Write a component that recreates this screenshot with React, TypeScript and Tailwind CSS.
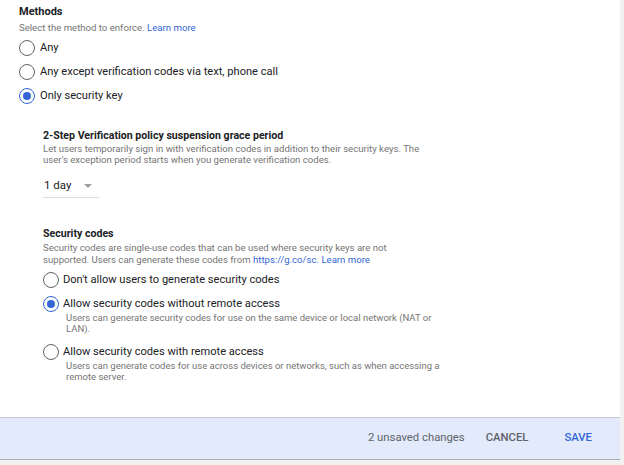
import { useState } from "react";

const methods = [
  "Any",
  "Any except verification codes via text, phone call",
  "Only security key",
];

const codeOptions = [
  { label: "Don't allow users to generate security codes", desc: "" },
  {
    label: "Allow security codes without remote access",
    desc: "Users can generate security codes for use on the same device or local network (NAT or LAN).",
  },
  {
    label: "Allow security codes with remote access",
    desc: "Users can generate codes for use across devices or networks, such as when accessing a remote server.",
  },
];

function Radio({ checked }: { checked: boolean }) {
  return (
    <span
      className={
        "flex h-[16px] w-[16px] shrink-0 items-center justify-center rounded-full border-[1.5px] " +
        (checked ? "border-[#3367d6]" : "border-[#5f6368]")
      }
    >
      {checked && <span className="h-[8px] w-[8px] rounded-full bg-[#3367d6]" />}
    </span>
  );
}

export default function App() {
  const [method, setMethod] = useState(2);
  const [code, setCode] = useState(1);

  return (
    <div
      className="flex h-[465px] w-[624px] flex-col overflow-hidden bg-[#f1f1f1] text-[#202124]"
      style={{ fontFamily: "Roboto, 'Liberation Sans', sans-serif" }}
    >
      <div className="flex h-[417px] w-[620px] flex-col bg-white pl-[19px] pt-[4px]">
        {/* Methods */}
        <h3 className="text-[11px] leading-[16px] font-bold">Methods</h3>
        <p className="mt-[1px] text-[9.6px] leading-[13px] text-[#757575]">
          Select the method to enforce. <span className="text-[#3367d6]">Learn more</span>
        </p>
        <div className="mt-[2px] flex flex-col">
          {methods.map((m, i) => (
            <label
              key={m}
              onClick={() => setMethod(i)}
              className="flex h-[24px] cursor-pointer items-center gap-[5px] text-[11.1px]"
            >
              <Radio checked={method === i} />
              <span>{m}</span>
            </label>
          ))}
        </div>

        {/* Grace period */}
        <div className="ml-[24px] mt-[21px] flex flex-col">
          <h3 className="text-[10.6px] leading-[14px] font-bold">
            2-Step Verification policy suspension grace period
          </h3>
          <p className="w-[390px] text-[9.6px] leading-[11px] text-[#757575]">
            Let users temporarily sign in with verification codes in addition to their security keys. The
            user&apos;s exception period starts when you generate verification codes.
          </p>
          <div className="mt-[10px] flex h-[23px] w-[56px] items-center justify-between border-b border-[#dadce0] pl-[1px] pr-[7px] text-[11.5px]">
            <span>1 day</span>
            <svg width="8" height="4" viewBox="0 0 8 4">
              <path d="M0 0h8L4 4z" fill="#9e9e9e" />
            </svg>
          </div>
        </div>

        {/* Security codes */}
        <div className="ml-[24px] mt-[29px] flex flex-col">
          <h3 className="text-[10.6px] leading-[14px] font-bold">Security codes</h3>
          <p className="mt-[1px] w-[390px] text-[9.6px] leading-[12px] text-[#757575]">
            Security codes are single-use codes that can be used where security keys are not supported.
            Users can generate these codes from <span className="text-[#3367d6]">https://g.co/sc. Learn more</span>
          </p>
          <div className="mt-[2px] flex flex-col">
            {codeOptions.map((o, i) => (
              <div key={o.label} className="flex flex-col">
                <label
                  onClick={() => setCode(i)}
                  className="flex h-[24px] cursor-pointer items-center gap-[4px] text-[11.1px]"
                >
                  <Radio checked={code === i} />
                  <span>{o.label}</span>
                </label>
                {o.desc && (
                  <p className="mb-[6px] ml-[23px] mt-[-3px] w-[380px] text-[9.5px] leading-[10.5px] text-[#757575]">
                    {o.desc}
                  </p>
                )}
              </div>
            ))}
          </div>
        </div>
      </div>

      {/* Footer */}
      <div className="flex h-[43px] w-[620px] items-center justify-end border-y border-t-[#c4c9d2] border-b-[#a9adb3] bg-[#e2eafc] pr-[28px] text-[11.3px]">
        <span className="text-[#5f6368]">2 unsaved changes</span>
        <button className="ml-[21px] font-medium text-[#5f6368]">CANCEL</button>
        <button className="ml-[36px] font-medium text-[#3367d6]">SAVE</button>
      </div>
    </div>
  );
}
